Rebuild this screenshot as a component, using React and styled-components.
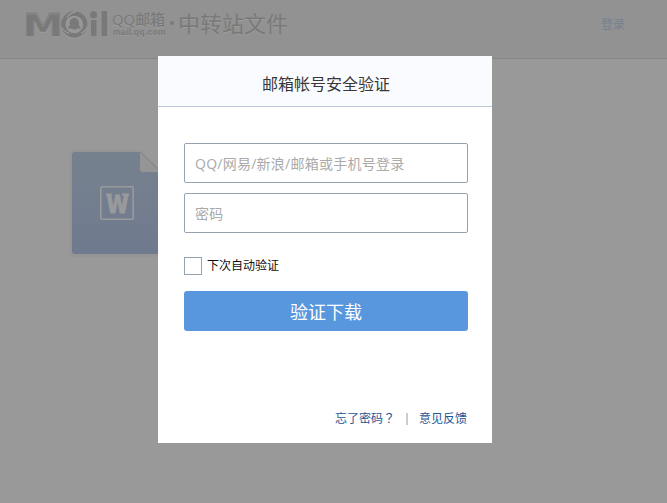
import React from 'react';
import styled, { createGlobalStyle } from 'styled-components';

const GlobalStyle = createGlobalStyle`
  * { box-sizing: border-box; }
  body {
    margin: 0;
    background: #999;
    font-family: "Open Sans", "Noto Sans CJK SC", sans-serif;
  }
  button, input { font-family: inherit; }
`;

const Page = styled.div`
  position: relative;
  width: 667px;
  height: 503px;
  overflow: hidden;
  background: #999;
`;

const Header = styled.header`
  display: flex;
  justify-content: space-between;
  height: 59px;
  padding: 8px 42px 0 24px;
  background: #929292;
  border-bottom: 1px solid #868686;
`;

const Brand = styled.div`
  display: flex;
  height: 34px;
  color: #797979;
  text-shadow: 0 1px 0 #9d9d9d;
`;

const BrandNames = styled.div`
  display: flex;
  flex-direction: column;
  width: 55px;
  margin-left: 1px;
  padding-top: 3px;
  white-space: nowrap;
`;

const BrandName = styled.span`
  font: 500 15px/17px "Open Sans", "Noto Sans CJK SC", sans-serif;
  letter-spacing: -0.1px;
`;

const BrandDomain = styled.span`
  padding-left: 1px;
  font: bold 8.5px/9px "Liberation Sans", sans-serif;
  letter-spacing: 0.3px;
`;

const Dot = styled.i`
  width: 4px;
  height: 4px;
  margin: 13px 5px 0 3px;
  border-radius: 50%;
  background: #797979;
`;

const SiteTitle = styled.h1`
  margin: 0 0 0 -1px;
  font: 400 22px/29px "Noto Sans CJK SC", sans-serif;
`;

const LoginLink = styled.a`
  margin-top: 8px;
  color: #76818f;
  font-size: 12px;
  line-height: 18px;
`;

const FileArea = styled.main`
  padding: 89px 0 0 68px;
`;

const Overlay = styled.div`
  position: absolute;
  inset: 0;
  display: flex;
  justify-content: center;
  align-items: flex-start;
  padding: 56px 17px 0 0;
  width: 667px;
`;

const Dialog = styled.section`
  display: flex;
  flex-direction: column;
  width: 334px;
  height: 387px;
  background: #fff;
`;

const DialogTitle = styled.h2`
  height: 51px;
  margin: 0;
  padding: 3px 0 0 2px;
  border-bottom: 1px solid #bccbdb;
  background: #fafbff;
  color: #383838;
  font-size: 16px;
  font-weight: 400;
  line-height: 50px;
  text-align: center;
`;

const Form = styled.form`
  display: flex;
  flex-direction: column;
  flex: 1;
  padding: 36px 24px 15px 26px;
`;

const Field = styled.input`
  width: 100%;
  height: 40px;
  margin-bottom: 10px;
  padding: 0 10px;
  border: 1px solid #94a3b2;
  border-radius: 2px;
  outline: 0;
  background: #fff;
  font-size: 14px;
  letter-spacing: 0.25px;
  &::placeholder { color: #aaa; opacity: 1; }
`;

const Remember = styled.label`
  display: flex;
  align-items: center;
  gap: 5px;
  height: 18px;
  margin-top: 14px;
  color: #111;
  font-size: 12px;
  line-height: 18px;
`;

const Checkbox = styled.input`
  appearance: none;
  width: 18px;
  height: 18px;
  margin: 0;
  border: 1px solid #94a3b2;
  background: #fff;
`;

const Submit = styled.button`
  height: 40px;
  margin-top: 16px;
  padding: 2px 0 0;
  border: 0;
  border-radius: 3px;
  background: #5897dd;
  color: #fff;
  font-size: 18px;
  line-height: 38px;
`;

const Links = styled.nav`
  display: flex;
  justify-content: flex-end;
  align-items: center;
  height: 18px;
  margin-top: auto;
  padding-right: 1px;
  font-size: 12px;
  line-height: 18px;
`;

const FootLink = styled.a`
  color: #1e5494;
  white-space: nowrap;
`;

const CenteredMark = styled.span`
  font-family: "Noto Sans CJK TC", sans-serif;
  line-height: 1;
`;

const Divider = styled.i`
  width: 2px;
  height: 12px;
  margin: 0 11px;
  background: #ccc;
`;

const MailMark = () => (
  <svg width="87" height="34" viewBox="24 8 87 34" fill="#797979" aria-hidden="true">
    <text x="22.8" y="36" fontFamily="DejaVu Sans" fontWeight="700" fontSize="31.5" textLength="40.4" lengthAdjust="spacingAndGlyphs" stroke="#797979" strokeWidth=".5">M</text>
    <circle cx="74.3" cy="25.3" r="13.2" fill="#a0a0a0" />
    <circle cx="74.3" cy="24.5" r="13.2" />
    <circle cx="74.3" cy="24.5" r="8.8" fill="#989898" />
    <path d="M76 11.5c-4 1-7 2.5-9 6M87 27c-1 3-3 5-6 6M62 28c2 3 4 4.5 7 5" fill="none" stroke="#989898" strokeWidth="1.3" />
    <path d="M74.3 18c3.3 0 4.6 2.2 4.6 5v2.4c1.7 1.2 2 2.3 1.5 3.2H77c-.5 1.6-4.9 1.6-5.4 0h-3.4c-.5-.9-.2-2 1.5-3.2V23c0-2.8 1.3-5 4.6-5z" />
    <circle cx="93.6" cy="14.7" r="3.5" />
    <rect x="91" y="20" width="5.5" height="16" />
    <rect x="101.6" y="11" width="5.5" height="25" />
  </svg>
);

const WordFile = () => (
  <svg width="112" height="114" viewBox="68 148 112 114" aria-hidden="true">
    <defs>
      <linearGradient id="paper" x1="0" y1="0" x2="0" y2="1">
        <stop offset="0" stopColor="#76818e" />
        <stop offset="1" stopColor="#707a8f" />
      </linearGradient>
    </defs>
    <path d="M75 152h65l20 20v83H75q-3 0-3-3v-97q0-3 3-3z" fill="none" stroke="#8e8e8e" strokeWidth="4" opacity=".35" />
    <path d="M75 152h65l20 20v82H75q-3 0-3-3v-96q0-3 3-3z" fill="url(#paper)" />
    <path d="M140 152l20 20h-17q-3 0-3-3z" fill="#959595" />
    <path d="M140.5 152l19.5 19" stroke="#858585" fill="none" />
    <rect x="100.8" y="186.8" width="32.4" height="32.4" rx="1" fill="none" stroke="#999a9c" strokeWidth="1.6" />
    <text x="106.5" y="212.7" fill="#999a9c" stroke="#999a9c" strokeWidth="1.1" fontFamily="DejaVu Sans" fontWeight="700" fontSize="25.5" textLength="22" lengthAdjust="spacingAndGlyphs">W</text>
    <path d="M105.8 193.4h6v2.2h-6zM122 193.4h7v2.2h-7z" fill="#999a9c" />
  </svg>
);

export default function App() {
  return (
    <>
      <GlobalStyle />
      <Page>
        <Header>
          <Brand>
            <MailMark />
            <BrandNames>
              <BrandName>QQ邮箱</BrandName>
              <BrandDomain>mail.qq.com</BrandDomain>
            </BrandNames>
            <Dot />
            <SiteTitle>中转站文件</SiteTitle>
          </Brand>
          <LoginLink>登录</LoginLink>
        </Header>
        <FileArea>
          <WordFile />
        </FileArea>
        <Overlay>
          <Dialog>
            <DialogTitle>邮箱帐号安全验证</DialogTitle>
            <Form>
              <Field placeholder="QQ/网易/新浪/邮箱或手机号登录" />
              <Field type="password" placeholder="密码" />
              <Remember>
                <Checkbox type="checkbox" />
                下次自动验证
              </Remember>
              <Submit type="button">验证下载</Submit>
              <Links>
                <FootLink>忘了密码<CenteredMark>？</CenteredMark></FootLink>
                <Divider />
                <FootLink>意见反馈</FootLink>
              </Links>
            </Form>
          </Dialog>
        </Overlay>
      </Page>
    </>
  );
}
